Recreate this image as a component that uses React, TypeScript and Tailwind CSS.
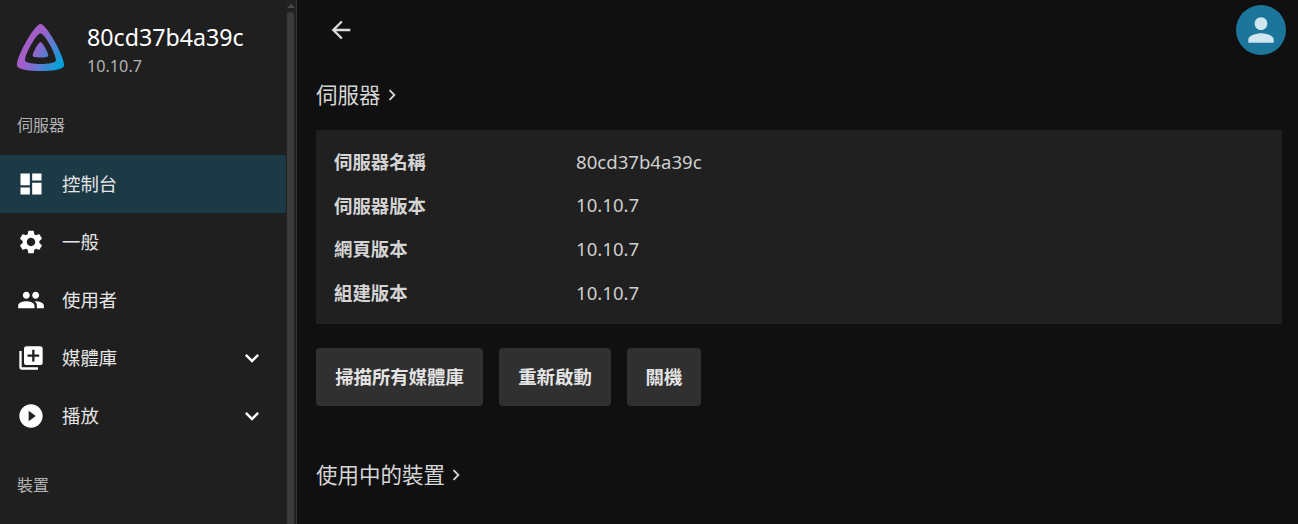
const ICONS = {
  dashboard: "M3 13h8V3H3v10zm0 8h8v-6H3v6zm10 0h8V11h-8v10zm0-18v6h8V3h-8z",
  settings:
    "M19.14 12.94c.04-.3.06-.61.06-.94 0-.32-.02-.64-.07-.94l2.03-1.58c.18-.14.23-.41.12-.61l-1.92-3.32c-.12-.22-.37-.29-.59-.22l-2.39.96c-.5-.38-1.03-.7-1.62-.94l-.36-2.54c-.04-.24-.24-.41-.48-.41h-3.84c-.24 0-.43.17-.47.41l-.36 2.54c-.59.24-1.13.57-1.62.94l-2.39-.96c-.22-.08-.47 0-.59.22L2.74 8.87c-.12.21-.08.47.12.61l2.03 1.58c-.05.3-.09.63-.09.94s.02.64.07.94l-2.03 1.58c-.18.14-.23.41-.12.61l1.92 3.32c.12.22.37.29.59.22l2.39-.96c.5.38 1.03.7 1.62.94l.36 2.54c.05.24.24.41.48.41h3.84c.24 0 .44-.17.47-.41l.36-2.54c.59-.24 1.13-.56 1.62-.94l2.39.96c.22.08.47 0 .59-.22l1.92-3.32c.12-.22.07-.47-.12-.61l-2.01-1.58zM12 15.6c-1.98 0-3.6-1.62-3.6-3.6s1.62-3.6 3.6-3.6 3.6 1.62 3.6 3.6-1.62 3.6-3.6 3.6z",
  people:
    "M16 11c1.66 0 2.99-1.34 2.99-3S17.66 5 16 5c-1.66 0-3 1.34-3 3s1.34 3 3 3zm-8 0c1.66 0 2.99-1.34 2.99-3S9.66 5 8 5C6.34 5 5 6.34 5 8s1.34 3 3 3zm0 2c-2.33 0-7 1.17-7 3.5V19h14v-2.5c0-2.33-4.67-3.5-7-3.5zm8 0c-.29 0-.62.02-.97.05 1.16.84 1.97 1.97 1.97 3.45V19h6v-2.5c0-2.33-4.67-3.5-7-3.5z",
  libraryAdd:
    "M4 6H2v14c0 1.1.9 2 2 2h14v-2H4V6zm16-4H8c-1.1 0-2 .9-2 2v12c0 1.1.9 2 2 2h12c1.1 0 2-.9 2-2V4c0-1.1-.9-2-2-2zm-1 9h-4v4h-2v-4H9V9h4V5h2v4h4v2z",
  playCircle: "M12 2C6.48 2 2 6.48 2 12s4.48 10 10 10 10-4.48 10-10S17.52 2 12 2zm-2 14.5v-9l6 4.5-6 4.5z",
  expandMore: "M16.59 8.59 12 13.17 7.41 8.59 6 10l6 6 6-6z",
  arrowBack: "M20 11H7.83l5.59-5.59L12 4l-8 8 8 8 1.41-1.41L7.83 13H20v-2z",
  chevronRight: "M10 6 8.59 7.41 13.17 12l-4.58 4.59L10 18l6-6z",
  person: "M12 12c2.21 0 4-1.79 4-4s-1.79-4-4-4-4 1.79-4 4 1.79 4 4 4zm0 2c-2.67 0-8 1.34-8 4v2h16v-2c0-2.66-5.33-4-8-4z",
};

function Icon({ d, className }: { d: string; className: string }) {
  return (
    <svg viewBox="0 0 24 24" fill="currentColor" className={className}>
      <path d={d} />
    </svg>
  );
}

function Logo() {
  return (
    <svg viewBox="0 0 24 24" className="w-[47px] h-[47px] shrink-0">
      <defs>
        <linearGradient id="jf" x1="1" y1="8" x2="23" y2="20" gradientUnits="userSpaceOnUse">
          <stop offset="0" stopColor="#aa5cc3" />
          <stop offset="0.35" stopColor="#a05fcb" />
          <stop offset="1" stopColor="#00a4dc" />
        </linearGradient>
      </defs>
      <path
        fill="url(#jf)"
        d="M12 .002C8.826.002-1.398 18.537.16 21.666c1.56 3.129 22.14 3.094 23.682 0C25.384 18.573 15.177 0 12 0zm7.76 18.949c-1.008 2.028-14.493 2.05-15.514 0C3.224 16.9 9.92 4.755 12.003 4.755c2.081 0 8.77 12.166 7.759 14.196zM12 9.198c-1.054 0-4.446 6.15-3.93 7.189.518 1.04 7.348 1.027 7.86 0 .511-1.027-2.874-7.19-3.93-7.19z"
      />
    </svg>
  );
}

const NAV = [
  { label: "控制台", icon: ICONS.dashboard, active: true },
  { label: "一般", icon: ICONS.settings },
  { label: "使用者", icon: ICONS.people },
  { label: "媒體庫", icon: ICONS.libraryAdd, expand: true },
  { label: "播放", icon: ICONS.playCircle, expand: true },
];

const INFO = [
  ["伺服器名稱", "80cd37b4a39c"],
  ["伺服器版本", "10.10.7"],
  ["網頁版本", "10.10.7"],
  ["組建版本", "10.10.7"],
];

const ACTIONS = [
  { label: "掃描所有媒體庫", width: "w-[167px]" },
  { label: "重新啟動", width: "w-[112px]" },
  { label: "關機", width: "w-[74px]" },
];

function Sidebar() {
  return (
    <aside className="flex w-[297px] shrink-0 border-r border-[#333333] bg-[#1f1f1f]">
      <div className="w-[286px] shrink-0">
        <div className="flex items-start gap-[23px] pl-[17px] pt-6 h-[96px]">
          <Logo />
          <div className="-mt-[5px]">
            <div className="text-[23.2px] leading-[36px] text-white">80cd37b4a39c</div>
            <div className="text-[16.2px] leading-[22px] text-[#b3b3b3]">10.10.7</div>
          </div>
        </div>
        <div className="pl-[17px] pt-[17px] h-[59px] text-[16px] leading-[24px] text-[#b3b3b3]">伺服器</div>
        {NAV.map((item) => (
          <div
            key={item.label}
            className={`flex items-center h-[58px] pl-[17px] pr-5 text-[18.4px] text-[#e6e6e6] ${
              item.active ? "bg-[#1b3a46]" : ""
            }`}
          >
            <Icon d={item.icon} className="w-7 h-7 shrink-0 text-white" />
            <span className="ml-[17px] flex-1">{item.label}</span>
            {item.expand && <Icon d={ICONS.expandMore} className="w-7 h-7 text-white" />}
          </div>
        ))}
        <div className="pl-[17px] pt-7 text-[16px] leading-[24px] text-[#b3b3b3]">裝置</div>
      </div>
      {/* Scrollbar */}
      <div className="flex flex-col items-center w-[10px] pt-1 pr-[1px] bg-[#222222]">
        <svg viewBox="0 0 8 4" className="w-2 h-1 text-[#4a4a4a]" fill="currentColor">
          <path d="M4 0 8 4H0z" />
        </svg>
        <div className="mt-1 w-[7px] flex-1 rounded-t bg-[#3c3c3c]" />
      </div>
    </aside>
  );
}

function SectionTitle({ text }: { text: string }) {
  return (
    <div className="flex items-center text-[21.5px] leading-[32px] text-[#d6d6d6]">
      {text}
      <Icon d={ICONS.chevronRight} className="w-[22px] h-[22px] text-[#d6d6d6]" />
    </div>
  );
}

export default function App() {
  return (
    <div
      className="flex h-[524px] w-[1298px] overflow-hidden bg-[#101010]"
      style={{ fontFamily: '"Noto Sans", "Noto Sans CJK TC", sans-serif' }}
    >
      <Sidebar />
      <main className="flex-1 pl-[19px] pr-4">
        <div className="flex items-start justify-between h-[79px] pt-[5px]">
          <Icon d={ICONS.arrowBack} className="w-7 h-7 ml-[11px] mt-[11px] text-[#dcdcdc]" />
          <div className="flex items-center justify-center w-[50px] h-[50px] -mr-1 rounded-full bg-[#1c769b]">
            <Icon d={ICONS.person} className="w-[38px] h-[38px] text-[#cfe6f0]" />
          </div>
        </div>
        <SectionTitle text="伺服器" />
        <div className="mt-[19px] h-[194px] bg-[#202020] pl-[18px] pr-[19px] pt-[10px]">
          {INFO.map(([label, value]) => (
            <div key={label} className="flex items-center h-[43.6px] text-[18.4px]">
              <div className="w-[242px] font-bold text-[#d4d4d4]">{label}</div>
              <div className="text-[18.6px] text-[#cfcfcf]">{value}</div>
            </div>
          ))}
        </div>
        <div className="mt-6 flex gap-4">
          {ACTIONS.map((action) => (
            <div
              key={action.label}
              className={`flex items-center justify-center h-[58px] rounded bg-[#303030] text-[18.4px] font-bold text-[#e4e4e4] ${action.width}`}
            >
              {action.label}
            </div>
          ))}
        </div>
        <div className="mt-[53px]">
          <SectionTitle text="使用中的裝置" />
        </div>
      </main>
    </div>
  );
}
